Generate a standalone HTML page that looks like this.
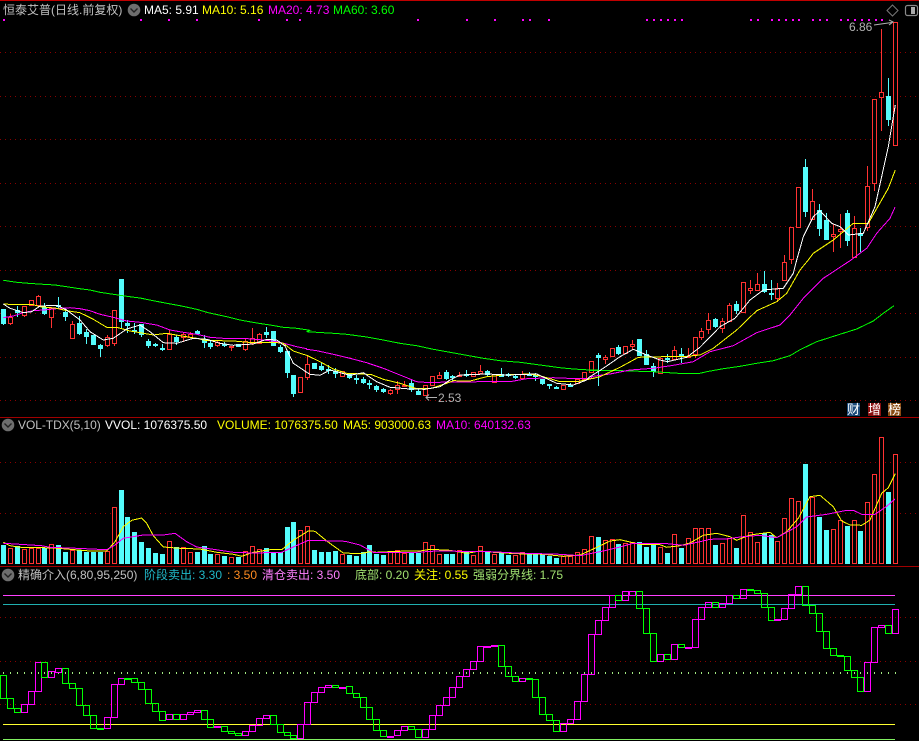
<!DOCTYPE html>
<html>
<head>
<meta charset="utf-8">
<title>恒泰艾普</title>
<style>
html,body{margin:0;padding:0;background:#000;}
#w{position:relative;width:919px;height:741px;overflow:hidden;background:#000;font-family:"Liberation Sans","Noto Sans CJK SC",sans-serif;font-size:12px;line-height:14px;}
#w span{position:absolute;white-space:pre;}
svg{position:absolute;left:0;top:0;}
.ic{width:13px;height:13px;color:#fff;font-size:13px;line-height:13px;text-align:center;}
</style>
</head>
<body>
<div id="w">
<svg id="s" width="919" height="741" viewBox="0 0 919 741"></svg>

<span style="left:3px;top:3px;color:#c0c0c0">恒泰艾普(日线.前复权)</span>
<span style="left:144px;top:3px;color:#fff">MA5: 5.91</span>
<span style="left:202px;top:3px;color:#ff0">MA10: 5.16</span>
<span style="left:268px;top:3px;color:#f0f">MA20: 4.73</span>
<span style="left:333px;top:3px;color:#0f0">MA60: 3.60</span>

<span style="left:849px;top:20px;color:#b0b0b0">6.86</span>
<span style="left:438px;top:391px;color:#b0b0b0">2.53</span>

<span class="ic" style="left:847px;top:403px;background:#1c4a7a">财</span>
<span class="ic" style="left:868px;top:403px;background:#8a0f0f">增</span>
<span class="ic" style="left:888px;top:403px;background:#8a4a10">榜</span>

<span style="left:18px;top:418px;color:#c0c0c0;letter-spacing:-0.05px">VOL-TDX(5,10)</span>
<span style="left:105px;top:418px;color:#fff">VVOL: 1076375.50</span>
<span style="left:217px;top:418px;color:#ff0">VOLUME: 1076375.50</span>
<span style="left:343px;top:418px;color:#ff0">MA5: 903000.63</span>
<span style="left:436px;top:418px;color:#f0f">MA10: 640132.63</span>

<span style="left:18px;top:568px;color:#c0c0c0">精确介入(6,80,95,250)</span>
<span style="left:144px;top:568px;color:#20b8c8">阶段卖出: 3.30</span>
<span style="left:227px;top:568px;color:#ff8c20">: 3.50</span>
<span style="left:262px;top:568px;color:#ff80ff">清仓卖出: 3.50</span>
<span style="left:355px;top:568px;color:#a0e070">底部: 0.20</span>
<span style="left:414px;top:568px;color:#ff0">关注: 0.55</span>
<span style="left:473px;top:568px;color:#a0e070">强弱分界线: 1.75</span>
</div>

<script>
var RED='#ff3232',CY='#54fcfc',o='';
function cx(i){return Math.floor(3.5+6.915*i);}
function hl(y,x1,x2,c,extra){o+='<line x1="'+x1+'" y1="'+(y+.5)+'" x2="'+x2+'" y2="'+(y+.5)+'" stroke="'+c+'" '+(extra||'')+'/>';}
// borders
hl(0,0,919,'#c00000');hl(417,0,919,'#a00000');hl(566,0,919,'#a00000');
// grid
[52,96,139,183,226,270,313,357,400,462,513,617,661,704].forEach(function(y){hl(y,0,919,'#8a0000','stroke-dasharray="1 4"');});
// top dots
[2.5,140,168,196,258,286,299,417,466,494,522,529,548,646,653,660,667,674,681,750,757,771,778,785,792,798,812,819,826,840,847,854,861,868,875,881].forEach(function(x){o+='<rect x="'+Math.round(x)+'" y="19" width="2" height="2" fill="#f0f"/>';});

// candles
var z2=[['c',118,162,118,165],['r',140,158,133,164],['c',121,128,107,140],['r',109,134,109,140],['r',91,106],['r',79,105,75,105],['c',110,132,100,135],['r',115,140,112,173],['c',105,110,82,115],['c',125,141,115,153],['r',162,204,153,207],['c',159,192,138,195],['c',186,201,177,222],['c',195,225],['c',225,237,222,261],['r',202,224,195,230],['r',121,218,121,227],['c',27,156,27,175],['c',159,168,150,190],['c',180,184,159,192],['c',163,194,163,201],['c',213,228,207,234],['c',223,226,218,232],['c',234,240,222,243],['r',192,236,180,239],['c',202,216,195,225],['r',192,202,187,216],['r',191,202,186,205],['c',184,192,180,192],['c',207,220,195,234],['c',219,231,213,237],['r',216,226,210,232],['c',222,228,216,232],['r',228,232,228,243],['c',223,231],['r',214,236,207,243],['r',203,219,174,225],['r',193,219,190,222],['c',186,195,171,205],['c',183,228],['c',232,246,225,249],['c',243,308,243,323],['c',315,372,315,381],['r',322,365]];
var z3=[['r',102,140,75,150],['c',99,117],['c',107,120,100,123],['c',118,123,105,132],['c',123,132,114,144],['r',124,137],['c',133,144,130,147],['c',143,147,136,161],['c',147,159,142,162],['c',160,163,150,177],['c',168,180,165,186],['c',177,186,174,189],['r',180,190,177,195],['r',165,178,153,192],['r',165,166,153,166],['c',159,180,150,186],['c',183,194,174,194],['r',165,194],['r',139,164],['r',135,143,126,143],['c',127,147,120,150],['c',139,143,135,152],['r',135,138,126,140],['c',133,136,120,140],['r',127,138],['r',124,129,105,132],['c',124,135,120,138],['r',132,157],['c',132,141,114,141],['c',133,137,129,141],['c',138,141,132,146],['r',133,143,124,145],['c',132,136,126,138],['c',134,140,130,153],['c',147,162,147,165],['c',162,165,162,177],['c',171,176,168,178],['r',164,176],['c',165,166,160,170],['r',147,160],['r',127,147]];
var z4=[['r',304,335],['c',286,293,280,378],['r',290,296,285,311],['r',265,287],['c',262,281,255,285],['r',259,278],['r',253,259,240,269],['c',238,288],['c',283,314,271,314],['c',317,337,310,352],['r',295,340],['c',293,295,282,309],['r',271,297,259,301],['c',283,289,265,308],['r',288,289,265,295],['r',232,282,232,295],['r',214,231,205,240],['r',181,208,160,222],['c',178,202,174,205],['r',184,204,175,218],['r',136,182,130,182],['c',132,153,124,162],['r',65,155],['r',85,89,60,101],['r',73,89,40,89],['c',72,95,34,98],['c',99,106,60,120],['r',83,114,70,125]];
var z5=[['r',787,840,766,840],['r',680,778,680,792],['r',562,682],['c',501,635,477,651],['r',604,656,568,656],['c',630,687,613,708],['c',660,720,640,720],['r',703,708,672,755],['r',688,692,642,743],['c',640,722,630,737],['r',685,772,648,772],['c',698,707,685,755],['r',557,680,498,692],['r',298,550,298,572],['r',277,292,87,392],['c',288,360,235,378],['r',65,434,65,437]];
var cs=[];
z2.forEach(function(d){cs.push([d,270]);});z3.forEach(function(d){cs.push([d,330]);});z4.forEach(function(d){cs.push([d,260]);});z5.forEach(function(d){cs.push([d,0]);});
cs.forEach(function(e,i){
 var d=e[0],b=e[1],t=Math.round(b+d[1]/3),u=Math.round(b+d[2]/3),x=cx(i),col=d[0]=='r'?RED:CY;
 if(d.length>3){var wt=Math.round(b+d[3]/3),wb=Math.round(b+d[4]/3);o+='<line x1="'+(x+.5)+'" y1="'+wt+'" x2="'+(x+.5)+'" y2="'+wb+'" stroke="'+col+'"/>';}
 if(d[0]=='r'){
  if(u-t<2){o+='<rect x="'+(x-2)+'" y="'+t+'" width="5" height="2" fill="'+col+'"/>';}
  else o+='<rect x="'+(x-1.5)+'" y="'+(t+.5)+'" width="4" height="'+(u-t)+'" fill="#000" stroke="'+col+'"/>';
 } else {
  o+='<rect x="'+(x-2)+'" y="'+t+'" width="5" height="'+Math.max(u-t,2)+'" fill="'+col+'"/>';
 }
});

function pl(c,segs){
 var p=[];
 segs.forEach(function(s){var ox=s[0],oy=s[1],a=s[2];for(var k=0;k<a.length;k+=2){p.push((ox+a[k]/3).toFixed(1)+','+(oy+a[k+1]/3).toFixed(1));}});
 o+='<polyline fill="none" stroke="'+c+'" stroke-width="1" shape-rendering="crispEdges" points="'+p.join(' ')+'"/>';
}
// MA60
pl('#00ff00',[[0,270,[10,31,50,37,85,40,130,43,165,45,200,50,230,55,270,60,300,67,340,73,380,79,420,84,460,92,500,100,540,107,590,118,625,128,680,140,720,150,770,159,810,165,850,172,890,175,930,181]],[300,330,[20,5,100,10,140,13,200,21,250,30,300,40,350,47,400,58,450,67,500,76,550,85,600,92,660,97,720,105,780,113,820,117,870,120,900,121]],[590,260,[0,331,60,331,120,333,190,335,265,340,325,341,350,335,400,326,450,319,500,310,550,302,600,287,630,269,680,245,740,226,800,207,850,183,880,160,912,137]]]);
// MA20
pl('#ff00ff',[[0,270,[10,143,40,138,70,128,100,122,130,120,170,116,210,113,240,116,270,122,300,133,340,142,380,153,420,157,470,165,510,180,550,187,590,193,630,202,670,205,730,205,790,210,830,215,860,222,890,230,920,236]],[300,330,[20,58,50,62,100,73,150,85,200,98,250,115,300,135,350,155,390,158,440,156,480,156,540,155,630,155,680,146,760,143,830,146,880,146]],[590,260,[0,350,60,342,120,330,190,325,250,316,310,305,360,275,430,257,500,218,570,195,600,165,640,115,700,55,780,2]],[760,0,[320,745,350,700,390,655,405,622]]]);
// MA10
pl('#ffff00',[[0,270,[10,102,50,104,100,104,120,110,170,115,200,122,240,128,280,148,320,172,350,172,390,183,420,188,460,195,500,190,540,197,590,205,620,212,660,212,700,213,760,218,820,217,850,220,880,243,910,253,920,256]],[300,330,[20,76,60,95,100,117,140,130,190,132,215,134,250,148,300,160,350,176,390,176,440,160,460,152,510,153,560,140,610,135,690,132,730,140,780,155,830,155,870,147]],[590,260,[0,357,30,350,90,322,145,292,220,290,290,289,330,285,370,265,440,210,500,152,560,125,590,100,630,30,655,0]],[760,0,[160,760,220,720,280,670,325,670,385,565,406,510]]]);
// MA5
pl('#ffffff',[[0,270,[10,102,30,115,70,128,95,125,120,108,170,106,200,120,240,150,270,185,310,210,340,205,380,177,420,165,450,185,490,218,530,220,580,205,620,208,660,220,700,226,760,222,800,208,830,210,855,228,880,280,920,307]],[300,330,[30,133,60,136,90,120,150,136,190,128,230,155,270,172,330,177,375,178,420,170,450,150,480,135,560,132,620,135,710,132,770,160,820,165,860,150]],[590,260,[0,350,40,325,90,290,130,268,170,285,210,300,232,305,290,292,330,262,390,200,435,175,480,120,520,90,580,85,610,40,620,0]],[760,0,[130,710,160,650,180,632,215,670,240,680,265,705,310,700,345,620,385,440,406,315]]]);

// arrows
o+='<polyline fill="none" stroke="#b0b0b0" points="874,25 892,22.5"/>';
o+='<polyline fill="none" stroke="#b0b0b0" points="889,20 893,22 889,25"/>';
o+='<polyline fill="none" stroke="#b0b0b0" points="437,397.5 426,397.5"/><polyline fill="none" stroke="#b0b0b0" points="429,394.5 426,397.5 429,400.5"/>';

// diamond + panel icon
o+='<polygon points="892.5,5 898,10.5 892.5,16 887,10.5" fill="none" stroke="#777"/>';
o+='<rect x="905.5" y="5.5" width="12" height="10" rx="2" fill="none" stroke="#888" stroke-width="1.2"/><rect x="911" y="7" width="4" height="7" fill="#aaa"/>';

// circles
function circ(x,y){o+='<circle cx="'+x+'" cy="'+y+'" r="6.3" fill="#6e6e6e"/><polyline points="'+(x-3.5)+','+(y-1.5)+' '+x+','+(y+2)+' '+(x+3.5)+','+(y-1.5)+'" fill="none" stroke="#222" stroke-width="1.4"/>';}
circ(134,10);circ(8,425);circ(8,575);

// volume
var vol=[[390,'c'],[400,'r'],[394,'c'],[402,'r'],[398,'r'],[398,'r'],[398,'c'],[388,'r'],[390,'c'],[411,'c'],[406,'r'],[404,'c'],[410,'c'],[410,'c'],[410,'c'],[408,'r'],[277,'r'],[225,'c'],[306,'c'],[351,'c'],[381,'c'],[399,'c'],[414,'c'],[417,'c'],[379,'r'],[396,'c'],[397,'r'],[412,'r'],[411,'c'],[393,'c'],[417,'c'],[417,'r'],[423,'c'],[427,'r'],[425,'c'],[408,'r'],[394,'r'],[402,'r'],[399,'c'],[414,'c'],[412,'c'],[336,'c'],[321,'c'],[346,'r'],[334,'r'],
[405,'c'],[411,'c'],[411,'c'],[408,'c'],[417,'r'],[420,'c'],[423,'c'],[411,'c'],[390,'c'],[417,'c'],[420,'c'],[412,'r'],[406,'r'],[414,'r'],[414,'c'],[414,'c'],[382,'r'],[391,'r'],[417,'r'],[417,'c'],[417,'c'],[406,'r'],[411,'c'],[420,'r'],[394,'r'],[408,'c'],[417,'r'],[414,'c'],[420,'c'],[420,'r'],[412,'r'],[417,'c'],[417,'c'],[417,'c'],[423,'c'],[429,'c'],[423,'r'],[423,'r'],[412,'r'],[403,'r'],[364,'r'],[366,'c'],[376,'r'],[373,'r'],[387,'c'],
[385,'r'],[380,'r'],[382,'c'],[396,'c'],[390,'c'],[397,'r'],[414,'c'],[358,'r'],[399,'c'],[370,'r'],[340,'r'],[340,'r'],[340,'r'],[390,'c'],[385,'r'],[370,'r'],[399,'c'],[301,'r'],[352,'r'],[382,'r'],[355,'c'],[360,'c'],[379,'r'],[310,'r'],[250,'r'],[259,'r'],[147,'c'],[247,'r'],[306,'c'],[345,'c'],[343,'r'],[316,'r'],[333,'c'],[316,'r'],[348,'c'],[262,'r'],[178,'r'],[67,'r'],[231,'c'],[118,'r']];
vol.forEach(function(d,i){
 var x=cx(i),t=Math.round(415+d[0]/3),b=564;
 if(d[1]=='r')o+='<rect x="'+(x-1.5)+'" y="'+(t+.5)+'" width="4" height="'+(b-t-1)+'" fill="#000" stroke="'+RED+'"/>';
 else o+='<rect x="'+(x-2)+'" y="'+t+'" width="5" height="'+(b-t)+'" fill="'+CY+'"/>';
});
pl('#ffff00',[[0,415,[10,382,30,392,70,398,130,398,160,399,200,402,270,408,320,408,345,380,370,335,395,316,425,309,440,325,460,362,490,396,540,400,600,402,650,412,700,418,725,424,760,412,810,404,845,404,880,376,925,348]],[310,415,[15,349,50,378,100,414,150,416,180,410,200,412,260,409,330,408,360,403,420,406,470,415,510,408,550,412,620,416,700,418,760,424,810,420,850,402,900,378]],[620,415,[0,374,60,388,120,389,140,397,180,392,210,384,250,361,290,355,330,365,350,376,390,360,450,352,470,368,500,350,535,310,570,245,600,241,640,275,665,318,690,330,725,331,750,315,785,235,805,218,826,176]]]);
pl('#ff00ff',[[0,415,[10,385,60,388,125,392,150,397,230,400,320,404,345,390,370,370,430,360,490,360,525,355,560,380,590,396,640,403,700,412,760,414,845,412,880,396,925,376]],[310,415,[105,379,150,390,190,412,320,412,380,408,540,410,620,414,750,418,810,422,880,408]],[620,415,[0,396,40,385,130,385,160,388,190,391,240,380,270,373,320,372,360,366,420,361,470,368,530,335,560,306,620,298,680,286,700,286,725,298,765,298,800,274,825,252]]]);

// bottom panel lines
hl(595,3,895,'#ff40ff');hl(604,3,895,'#20b0b0');hl(724,3,895,'#ffff30');hl(739,3,895,'#80f060');
for(var i=0;i<130;i++){o+='<rect x="'+cx(i)+'" y="672" width="1" height="2" fill="#a0e880"/>';}

var st=[['g',331,400],['g',400,430],['g',430,440],['m',418,440],['m',379,418],['m',292,379],['g',292,337],['m',319,337],['m',310,320],['g',310,355],['g',355,370],['g',370,421],['g',421,451],['g',451,490],['g',490,490],['m',457,490],['m',358,457],['m',340,358],['g',340,340],['g',340,352],['g',352,373],['g',373,415],['g',415,439],['g',439,464],['m',448,463],['g',448,463],['m',448,463],['m',442,448],['m',436,442],['g',436,463],['g',463,487],['m',484,487],['g',484,497],['g',497,505],['g',505,511],['m',499,511],['m',481,499],['m',460,481],['m',451,460],['g',451,478],['g',478,502],['g',502,511],['g',511,520],['m',478,520],['m',412,478],
['m',382,412],['m',367,382],['m',361,367],['g',361,367],['m',365,367],['g',364,385],['g',385,397],['g',397,427],['g',427,463],['g',463,496],['g',496,514],['m',512,514],['m',496,511],['m',484,496],['g',484,493],['g',493,517],['m',493,517],['m',451,493],['m',421,451],['m',397,421],['m',367,397],['m',334,367],['m',313,334],['m',289,313],['m',244,289],['m',242,244],['m',241,242],['g',241,304],['g',304,334],['g',334,349],['m',340,349],['g',340,343],['g',343,397],['g',397,448],['g',448,466],['g',466,499],['m',475,499],['m',463,475],['m',409,463],['m',328,409],['m',208,328],['m',166,208],['m',127,166],['m',91,127],['g',91,106],
['m',79,106],['m',79,91],['g',79,130],['g',130,205],['g',205,287],['m',268,287],['g',268,283],['m',238,283],['g',238,247],['m',247,247],['m',163,247],['m',127,163],['m',112,127],['g',112,127],['m',115,127],['m',91,115],['g',91,100],['m',73,100],['g',73,76],['g',76,85],['g',85,127],['g',127,166],['m',163,166],['m',130,163],['m',88,130],['m',64,88],['g',64,121],['g',121,145],['g',145,199],['g',199,250],['g',250,271],['g',271,274],['g',274,316],['g',316,337],['g',337,379],['m',292,379],['m',187,292],['m',181,187],['g',181,205],['m',133,205]];
st.forEach(function(d,i){
 var x=cx(i),t=Math.round(565+d[1]/3),u=Math.round(565+d[2]/3),c=d[0]=='g'?'#00ff00':'#ff00ff';
 o+='<rect x="'+(x-2.5)+'" y="'+(t+.5)+'" width="6" height="'+Math.max(u-t,1)+'" fill="none" stroke="'+c+'"/>';
});
document.getElementById('s').innerHTML=o;
</script>
</body>
</html>
